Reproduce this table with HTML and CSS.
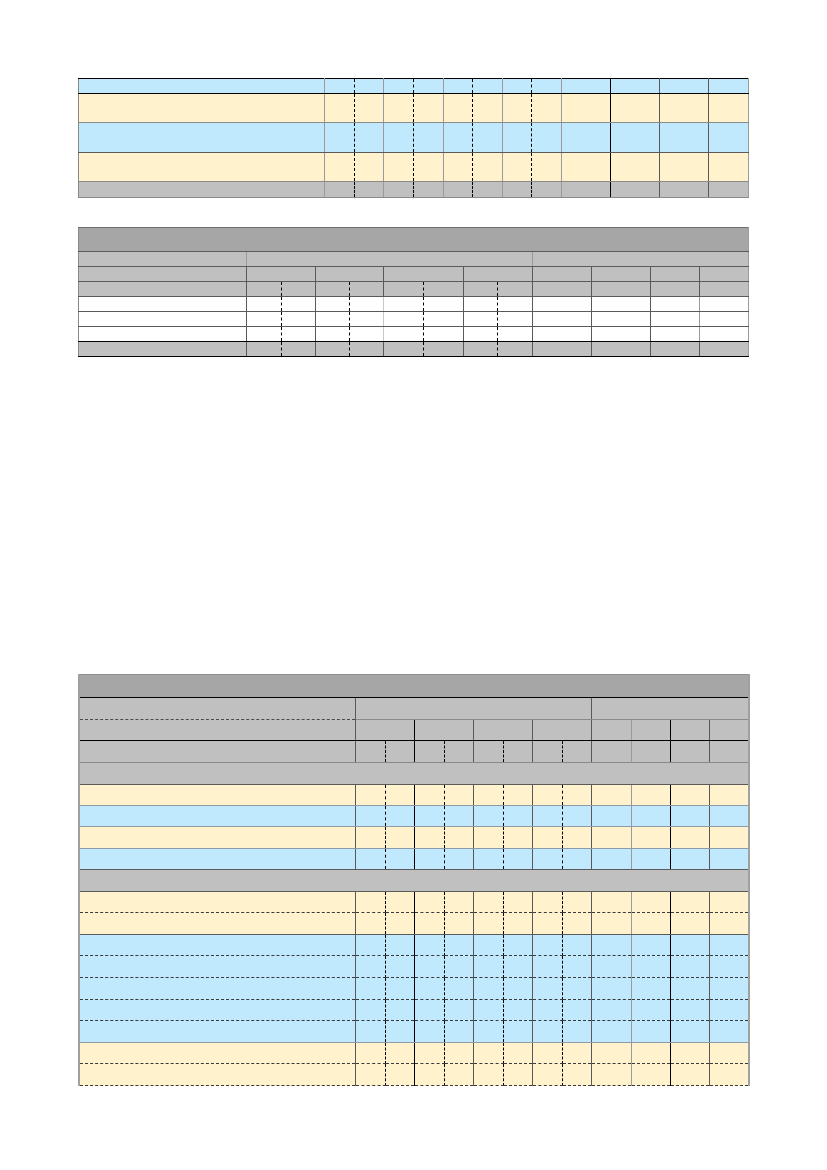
FILE: index.html
```html
<!DOCTYPE html>
<html>
<head>
<meta charset="utf-8">
<link rel="stylesheet" href="styles.css">
</head>
<body>
<div class="page">

<table class="sheet t1">
<colgroup><col style="width:246px"><col style="width:30px"><col style="width:29px"><col style="width:30px"><col style="width:30px"><col style="width:29px"><col style="width:30px"><col style="width:29px"><col style="width:30px"><col style="width:49px"><col style="width:49px"><col style="width:49px"><col style="width:40px"></colgroup>
<tr class="b bk h15"><td class="g"></td><td class="d"></td><td class="g"></td><td class="d"></td><td class="g"></td><td class="d"></td><td class="g"></td><td class="d"></td><td class="g"></td><td class="k"></td><td></td><td></td><td class="g"></td></tr>
<tr class="y bg h29"><td class="g"></td><td class="d"></td><td class="g"></td><td class="d"></td><td class="g"></td><td class="d"></td><td class="g"></td><td class="d"></td><td class="g"></td><td class="k"></td><td></td><td></td><td class="g"></td></tr>
<tr class="b bm h30"><td class="g"></td><td class="d"></td><td class="g"></td><td class="d"></td><td class="g"></td><td class="d"></td><td class="g"></td><td class="d"></td><td class="g"></td><td class="k"></td><td></td><td></td><td class="g"></td></tr>
<tr class="y bg h29"><td class="g"></td><td class="d"></td><td class="g"></td><td class="d"></td><td class="g"></td><td class="d"></td><td class="g"></td><td class="d"></td><td class="g"></td><td class="k"></td><td></td><td></td><td class="g"></td></tr>
<tr class="s bg h16"><td class="g"></td><td class="d"></td><td class="g"></td><td class="d"></td><td class="g"></td><td class="d"></td><td class="g"></td><td class="d"></td><td class="g"></td><td class="k"></td><td></td><td></td><td class="g"></td></tr>
</table>

<table class="sheet t2">
<colgroup><col style="width:168px"><col style="width:35px"><col style="width:34px"><col style="width:34px"><col style="width:34px"><col style="width:40px"><col style="width:40px"><col style="width:34px"><col style="width:35px"><col style="width:59px"><col style="width:59px"><col style="width:49px"><col style="width:49px"></colgroup>
<tr class="t bm h24"><td colspan="13" class="g"></td></tr>
<tr class="s bm h15"><td class="g"></td><td colspan="8" class="g"></td><td colspan="4" class="g"></td></tr>
<tr class="s bm h15"><td></td><td colspan="2"></td><td colspan="2"></td><td colspan="2"></td><td colspan="2"></td><td></td><td></td><td></td><td class="g"></td></tr>
<tr class="s bm h15"><td></td><td class="d"></td><td></td><td class="d"></td><td></td><td class="d"></td><td></td><td class="d"></td><td></td><td></td><td></td><td></td><td class="g"></td></tr>
<tr class="w bm h15"><td></td><td class="d"></td><td></td><td class="d"></td><td class="l"></td><td class="d"></td><td></td><td class="d"></td><td></td><td></td><td></td><td class="g"></td><td class="g"></td></tr>
<tr class="w bm h15"><td></td><td class="d"></td><td></td><td class="d"></td><td class="l"></td><td class="d"></td><td></td><td class="d"></td><td></td><td></td><td></td><td class="g"></td><td class="g"></td></tr>
<tr class="w bk h15"><td></td><td class="d"></td><td></td><td class="d"></td><td class="l"></td><td class="d"></td><td></td><td class="d"></td><td></td><td></td><td></td><td class="g"></td><td class="g"></td></tr>
<tr class="s bk h15"><td></td><td class="d"></td><td></td><td class="d"></td><td></td><td class="d"></td><td></td><td class="d"></td><td></td><td></td><td></td><td></td><td class="g"></td></tr>
</table>

<table class="sheet t3">
<colgroup><col style="width:276px"><col style="width:30px"><col style="width:29px"><col style="width:30px"><col style="width:29px"><col style="width:30px"><col style="width:29px"><col style="width:30px"><col style="width:29px"><col style="width:40px"><col style="width:39px"><col style="width:39px"><col style="width:40px"></colgroup>
<tr class="t bk h23"><td colspan="13" class="e"></td></tr>
<tr class="s bg h22"><td class="lab"></td><td colspan="8"></td><td colspan="4" class="e"></td></tr>
<tr class="s bk h21"><td></td><td colspan="2" class="k"></td><td colspan="2"></td><td colspan="2"></td><td colspan="2"></td><td class="g"></td><td class="k"></td><td></td><td class="e"></td></tr>
<tr class="s bg h22"><td></td><td class="d"></td><td class="k"></td><td class="d"></td><td></td><td class="d"></td><td></td><td class="d"></td><td></td><td class="g"></td><td class="k"></td><td></td><td class="e"></td></tr>
<tr class="s bm h22"><td colspan="13" class="e"></td></tr>
<tr class="y bb h21"><td></td><td class="d"></td><td class="k"></td><td class="d"></td><td></td><td class="d"></td><td></td><td class="d"></td><td></td><td class="g"></td><td class="k"></td><td></td><td class="e"></td></tr>
<tr class="b bb h21"><td></td><td class="d"></td><td class="k"></td><td class="d"></td><td></td><td class="d"></td><td></td><td class="d"></td><td></td><td class="g"></td><td class="k"></td><td></td><td class="e"></td></tr>
<tr class="y bb h22"><td></td><td class="d"></td><td class="k"></td><td class="d"></td><td></td><td class="d"></td><td></td><td class="d"></td><td></td><td class="g"></td><td class="k"></td><td></td><td class="e"></td></tr>
<tr class="b bm h21"><td></td><td class="d"></td><td class="k"></td><td class="d"></td><td></td><td class="d"></td><td></td><td class="d"></td><td></td><td class="g"></td><td class="k"></td><td></td><td class="e"></td></tr>
<tr class="s bm h22"><td colspan="13" class="e"></td></tr>
<tr class="y bd h21"><td></td><td class="d"></td><td class="k"></td><td class="d"></td><td></td><td class="d"></td><td></td><td class="d"></td><td></td><td class="g"></td><td class="k"></td><td></td><td class="e"></td></tr>
<tr class="y bm h22"><td></td><td class="d"></td><td class="k"></td><td class="d"></td><td></td><td class="d"></td><td></td><td class="d"></td><td></td><td class="g"></td><td class="k"></td><td></td><td class="e"></td></tr>
<tr class="b bd h21"><td></td><td class="d"></td><td class="k"></td><td class="d"></td><td></td><td class="d"></td><td></td><td class="d"></td><td></td><td class="g"></td><td class="k"></td><td></td><td class="e"></td></tr>
<tr class="b bd h22"><td></td><td class="d"></td><td class="k"></td><td class="d"></td><td></td><td class="d"></td><td></td><td class="d"></td><td></td><td class="g"></td><td class="k"></td><td></td><td class="e"></td></tr>
<tr class="b bd h22"><td></td><td class="d"></td><td class="k"></td><td class="d"></td><td></td><td class="d"></td><td></td><td class="d"></td><td></td><td class="g"></td><td class="k"></td><td></td><td class="e"></td></tr>
<tr class="b bd h21"><td></td><td class="d"></td><td class="k"></td><td class="d"></td><td></td><td class="d"></td><td></td><td class="d"></td><td></td><td class="g"></td><td class="k"></td><td></td><td class="e"></td></tr>
<tr class="b bb h22"><td></td><td class="d"></td><td class="k"></td><td class="d"></td><td></td><td class="d"></td><td></td><td class="d"></td><td></td><td class="g"></td><td class="k"></td><td></td><td class="e"></td></tr>
<tr class="y bd h21"><td></td><td class="d"></td><td class="k"></td><td class="d"></td><td></td><td class="d"></td><td></td><td class="d"></td><td></td><td class="g"></td><td class="k"></td><td></td><td class="e"></td></tr>
<tr class="y bd h22"><td></td><td class="d"></td><td class="k"></td><td class="d"></td><td></td><td class="d"></td><td></td><td class="d"></td><td></td><td class="g"></td><td class="k"></td><td></td><td class="e"></td></tr>
</table>

</div>
</body>
</html>
```

FILE: styles.css
```css
html, body {
  margin: 0;
  padding: 0;
  background: #ffffff;
  font-family: "Liberation Sans", Arial, sans-serif;
}

.page {
  padding: 78px 0 0 78px;
}

.sheet {
  border-collapse: collapse;
  table-layout: fixed;
  width: 670px;
}

.sheet td {
  padding: 0;
  border-right: 1px solid #595959;
  border-bottom: 1px solid #595959;
}

.t1 {
  border-top: 1px solid #000000;
  border-left: 1px solid #8a8a8a;
  margin-bottom: 29px;
}

.t2 {
  border-top: 1px solid #6e6e6e;
  border-left: 1px solid #8a8a8a;
  margin-bottom: 317px;
}

.t3 {
  border-top: 1px solid #8f8f8f;
  border-left: 2px solid #a0a0a0;
}

/* vertical line styles */
.sheet td.d { border-right: 1px dashed #000000; }
.sheet td.k { border-right-color: #000000; }
.sheet td.g { border-right-color: #9a9a9a; }
.sheet td.l { border-right-color: #c8c8c8; }
.sheet td.e { border-right: 2px solid #a0a0a0; }

/* horizontal line styles */
.bk td { border-bottom-color: #000000; }
.bm td { border-bottom-color: #5a5a5a; }
.bg td { border-bottom-color: #8a8a8a; }
.bb td { border-bottom-color: #8c9ba6; }
.sheet .bd td { border-bottom: 1px dashed #3a3a3a; }
.sheet td.lab { border-bottom: 1px dashed #4a4a4a; }

/* fills */
.y td { background: #fff2cc; }
.b td { background: #c1e9fd; }
.s td { background: #c0c0c0; }
.t td { background: #a6a6a6; }
.w td { background: #ffffff; }

/* row heights */
.h15 { height: 15px; }
.h16 { height: 16px; }
.h21 { height: 21px; }
.h22 { height: 22px; }
.h23 { height: 23px; }
.h24 { height: 24px; }
.h29 { height: 29px; }
.h30 { height: 30px; }
```
